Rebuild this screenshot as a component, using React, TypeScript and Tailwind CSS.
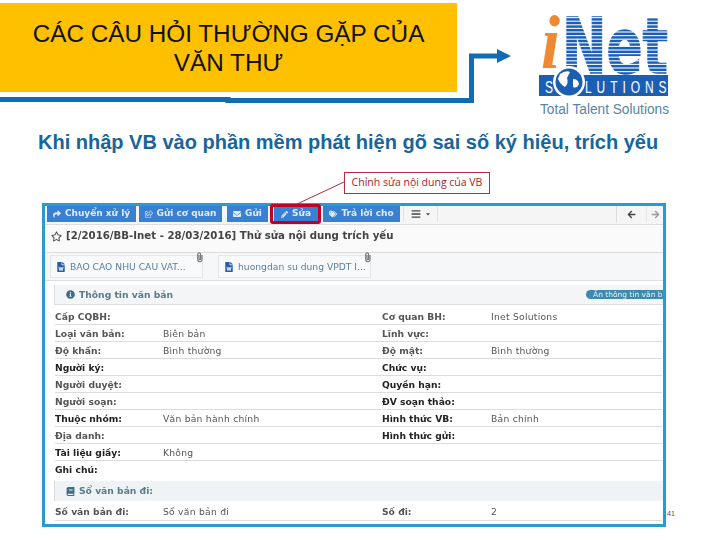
import React from "react";
import {
  FaArrowLeft,
  FaArrowRight,
  FaBars,
  FaBook,
  FaCaretDown,
  FaEnvelope,
  FaFileWord,
  FaInfoCircle,
  FaPaperclip,
  FaPencilAlt,
  FaRegShareSquare,
  FaRegStar,
  FaShare,
  FaTags,
} from "react-icons/fa";

const rows = [
  ["Cấp CQBH:", "", "Cơ quan BH:", "Inet Solutions"],
  ["Loại văn bản:", "Biên bản", "Lĩnh vực:", ""],
  ["Độ khẩn:", "Bình thường", "Độ mật:", "Bình thường"],
  ["Người ký:", "", "Chức vụ:", ""],
  ["Người duyệt:", "", "Quyền hạn:", ""],
  ["Người soạn:", "", "ĐV soạn thảo:", ""],
  ["Thuộc nhóm:", "Văn bản hành chính", "Hình thức VB:", "Bản chính"],
  ["Địa danh:", "", "Hình thức gửi:", ""],
  ["Tài liệu giấy:", "Không", "", ""],
  ["Ghi chú:", "", "", ""],
];

const Logo = () => (
  <svg width="136" height="112" viewBox="0 0 136 112" className="shrink-0">
    <text x="3" y="60" fontFamily="Liberation Serif" fontSize="76" fontStyle="italic" fontWeight="700" fill="#ee8a33" textLength="19" lengthAdjust="spacingAndGlyphs">
      i
    </text>
    <text x="24" y="65" fontFamily="DejaVu Sans" fontSize="76" fontWeight="700" fill="#1b5fb4" stroke="#1b5fb4" strokeWidth="1.5" textLength="106" lengthAdjust="spacingAndGlyphs">
      Net
    </text>
    {Array.from({ length: 16 }).map((_, i) => (
      <rect key={i} x="22" y={9 + i * 3.6} width="112" height="1.2" fill="#ffffff" opacity="0.9" />
    ))}
    <rect x="1" y="67" width="129" height="21" fill="#1b5fb4" />
    <text transform="translate(7,85) scale(0.8,1.15)" fontFamily="Liberation Sans" fontSize="15" fill="#ffffff">
      S
    </text>
    <text transform="translate(47,85) scale(0.8,1.15)" fontFamily="Liberation Sans" fontSize="15" fill="#ffffff" textLength="102" lengthAdjust="spacing">
      LUTIONS
    </text>
    <circle cx="31" cy="74" r="16" fill="#ffffff" />
    <circle cx="31" cy="74" r="13.5" fill="#1b5fb4" />
    <path d="M22 66 q6 -4 10 -2 l-3 6 q2 5 -2 9 q-5 -3 -7 -8 z M35 71 q5 0 6 5 q-2 5 -6 3 z" fill="#ffffff" />
    <text x="2" y="106" fontFamily="Liberation Sans" fontSize="14" fill="#5b84a6" textLength="129" lengthAdjust="spacingAndGlyphs">
      Total Talent Solutions
    </text>
  </svg>
);

const ToolButton = ({ icon, label, className }: { icon: React.ReactNode; label: string; className: string }) => (
  <div className={`flex h-4 items-center justify-center gap-1 bg-[#3a80d2] text-[9px] font-bold text-[#dfeafa] ${className}`}>
    {icon}
    <span>{label}</span>
  </div>
);

const Attachment = ({ name, className }: { name: string; className: string }) => (
  <div className={`relative flex h-[23px] w-[153px] items-center gap-1 border border-[#e3e6e8] bg-[#f8f9fa] pl-[5px] text-[9.2px] ${className}`}>
    <FaFileWord className="shrink-0 text-[10px] text-[#2a5ea8]" />
    <span className="whitespace-nowrap text-[#5c7f9c]">{name}</span>
    <FaPaperclip className="absolute right-[-2px] top-[-3px] rotate-[-45deg] text-[9px] text-[#777777]" />
  </div>
);

const Panel = () => (
  <div className="h-[324px] w-[624px] border-[3px] border-[#2a9bd0] bg-white font-['DejaVu_Sans',sans-serif] blur-[0.4px]">
    <div className="flex h-[19px] items-start border-b border-[#dddddd] bg-[#f5f5f5] pl-[2px]">
      <ToolButton icon={<FaShare className="text-[8px]" />} label="Chuyển xử lý" className="w-[89px]" />
      <ToolButton icon={<FaRegShareSquare className="text-[8px]" />} label="Gửi cơ quan" className="ml-[3px] w-[83px]" />
      <ToolButton icon={<FaEnvelope className="text-[8px]" />} label="Gửi" className="ml-[5px] w-[41px]" />
      <ToolButton icon={<FaPencilAlt className="text-[7px]" />} label="Sửa" className="ml-[6px] w-[44px]" />
      <ToolButton icon={<FaTags className="text-[8px]" />} label="Trả lời cho" className="ml-[5px] w-[77px]" />
      <div className="ml-[3px] flex h-4 w-[35px] items-center justify-center gap-1 border-x border-[#e2e2e2] text-[#444444]">
        <FaBars className="text-[10px]" />
        <FaCaretDown className="text-[6px]" />
      </div>
      <div className="ml-auto flex h-4 items-center border-l border-[#dddddd] text-[9px]">
        <div className="flex h-4 w-[30px] items-center justify-center border-r border-[#e6e6e6] text-[#444444]">
          <FaArrowLeft />
        </div>
        <div className="flex h-4 w-[16px] items-center justify-center text-[#999999]">
          <FaArrowRight />
        </div>
      </div>
    </div>
    <div className="flex h-[28px] items-center gap-1 border-b border-[#dddddd] bg-[#fafafa] pb-[5px] pl-[6px] text-[10.2px] font-bold text-[#444444]">
      <FaRegStar className="text-[11px] font-normal" />
      <span>[2/2016/BB-Inet - 28/03/2016] Thử sửa nội dung trích yếu</span>
    </div>
    <div className="flex h-[28px] items-center border-b border-[#dddddd] bg-[#f5f7f9] pl-[5px]">
      <Attachment name="BAO CAO NHU CAU VAT..." className="" />
      <Attachment name="huongdan su dung VPDT I..." className="ml-[15px]" />
    </div>
    <div className="ml-[9px] mt-[4px] flex h-[20px] items-center border-b border-l border-[#dddddd] bg-[#f3f5f7] pl-[11px] text-[9.2px] font-bold text-[#5a7a8c]">
      <FaInfoCircle className="mr-1 text-[9px] text-[#3d6e88]" />
      <span>Thông tin văn bản</span>
      <div className="ml-auto h-[9px] w-[77px] overflow-hidden whitespace-nowrap rounded-l-full bg-[#3f8bb0] pl-[7px] text-[7.5px] font-normal leading-[9px] text-[#e6f2f7]">
        Ẩn thông tin văn bản
      </div>
    </div>
    {rows.map((r, i) => (
      <div key={r[0]} className={`ml-[10px] mr-[1px] grid grid-cols-[108px_219px_109px_1fr] items-center border-b text-[9.2px] ${i === 0 ? "h-[20px] pt-[4px]" : "h-[17px] pt-[2px]"} ${i === 9 ? "border-transparent" : "border-[#dcdcdc]"}`}>
        <span className={`font-bold ${i === 3 || i === 6 || i === 8 || i === 9 ? "text-[#222222]" : "text-[#555555]"}`}>{r[0]}</span>
        <span className="tracking-[0.25px] text-[#555555]">{r[1]}</span>
        <span className={`font-bold ${i >= 3 && i <= 7 ? "text-[#222222]" : "text-[#555555]"}`}>{r[2]}</span>
        <span className="tracking-[0.25px] text-[#555555]">{r[3]}</span>
      </div>
    ))}
    <div className="ml-[9px] mt-[3px] flex h-[20px] items-center gap-1 border-l border-[#dddddd] bg-[#f0f3f6] pl-[11px] text-[9.2px] font-bold text-[#5a7a8c]">
      <FaBook className="text-[9px] text-[#3d6e88]" />
      <span>Sổ văn bản đi:</span>
    </div>
    <div className="ml-[10px] mr-[1px] grid h-[20px] grid-cols-[108px_219px_109px_1fr] items-center border-b border-[#dcdcdc] pt-[3px] text-[9.2px] text-[#333333]">
      <span className="font-bold text-[#555555]">Số văn bản đi:</span>
      <span className="tracking-[0.25px] text-[#555555]">Sổ văn bản đi</span>
      <span className="font-bold text-[#555555]">Số đi:</span>
      <span className="tracking-[0.25px] text-[#555555]">2</span>
    </div>
  </div>
);

export default function App() {
  return (
    <div className="relative h-[540px] w-[720px] overflow-hidden bg-white font-['Liberation_Sans',sans-serif]">
      <div className="flex h-[122px] items-start">
        <div className="mt-[3px] flex h-[89px] w-[457px] items-center justify-center bg-[#ffc000] text-center text-[24.3px] leading-[29px] text-[#111111]">
          <p>
            CÁC CÂU HỎI THƯỜNG GẶP CỦA
            <br />
            VĂN THƯ
          </p>
        </div>
        <div className="ml-[81px] mt-[8px]">
          <Logo />
        </div>
      </div>
      <h2 className="mt-[7px] whitespace-nowrap pl-[38px] text-[20px] font-bold leading-[26px] text-[#17659c]">
        Khi nhập VB vào phần mềm phát hiện gõ sai số ký hiệu, trích yếu
      </h2>
      <div className="ml-[42px] mt-[48px] flex items-end">
        <Panel />
        <span className="mb-[8px] ml-[1px] text-[7px] text-[#555555]">41</span>
      </div>

      {/* blue connector to the logo */}
      <svg className="absolute left-0 top-0" width="520" height="110" viewBox="0 0 520 110">
        <path d="M0 99.5 H228 V100.5 H471.5 V56 H500" fill="none" stroke="#0f6cb5" strokeWidth="5" />
        <path d="M497 49 L511 56 L497 63 Z" fill="#0f6cb5" />
      </svg>

      {/* callout over the screenshot */}
      <svg className="absolute left-[290px] top-[175px]" width="60" height="35" viewBox="0 0 60 35">
        <path d="M54 7 L7 29" fill="none" stroke="#a8323f" strokeWidth="1" />
      </svg>
      <div className="absolute left-[344px] top-[172px] flex h-[22px] w-[146px] items-center justify-center border border-[#b0303f] bg-white font-['Open_Sans',sans-serif] text-[10.5px] text-[#a8222f]">
        Chỉnh sửa nội dung của VB
      </div>
      <div className="absolute left-[270px] top-[204px] h-[20px] w-[51px] rounded-[3px] border-[3px] border-[#c00020]" />
    </div>
  );
}
